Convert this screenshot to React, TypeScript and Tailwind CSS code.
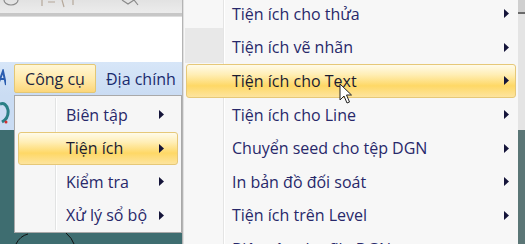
import React from "react";

const Arrow = () => (
  <svg width="5" height="9" viewBox="0 0 5 9" className="shrink-0">
    <path d="M0 0 L5 4.5 L0 9 Z" fill="#15153a" />
  </svg>
);

const subItems = [
  "Tiện ích cho thửa",
  "Tiện ích vẽ nhãn",
  "Tiện ích cho Text",
  "Tiện ích cho Line",
  "Chuyển seed cho tệp DGN",
  "In bản đồ đối soát",
  "Tiện ích trên Level",
  "Biên tập cho file DGN",
];

const leftItems = ["Biên tập", "Tiện ích", "Kiểm tra", "Xử lý sổ bộ"];

const hl =
  "bg-[linear-gradient(to_bottom,#fffbea_0%,#ffeeb5_30%,#fed866_65%,#fde49e_100%)] border border-[#e6c878] rounded-[3px]";

export default function App() {
  return (
    <div
      className="w-[525px] h-[244px] overflow-hidden relative flex bg-[#3e6d70] font-medium"
      style={{ fontFamily: '"Open Sans", "Noto Sans", sans-serif' }}
    >
      {/* left application column */}
      <div className="w-[182px] h-full flex flex-col shrink-0">
        {/* toolbar */}
        <div className="h-[13px] bg-[linear-gradient(to_bottom,#e2e2e2,#ececec)] relative">
          <svg width="182" height="13" className="absolute left-0 top-0">
            <path d="M4 0 A7 5 0 0 0 18 0" stroke="#8a8a8a" strokeWidth="1.2" fill="none" />
            <path d="M42 0 L42 6 M48 2 L55 2 M62 0 L64 7 M73 0 L73 5" stroke="#b5a89a" strokeWidth="1.2" fill="none" />
            <path d="M122 0 L128 4 L134 0 M134 0 L138 5" stroke="#8a8a8a" strokeWidth="1.2" fill="none" />
          </svg>
        </div>
        <div className="h-[4px] bg-[#c7c7c7] border-b border-[#dedede]" />
        {/* white area */}
        <div className="h-[45px] bg-white" />
        {/* menubar */}
        <div className="h-[33px] bg-[linear-gradient(to_bottom,#d7e6f8,#cadcf3)] flex items-center text-[16px] relative">
          <svg width="6" height="20" className="absolute left-0 top-[7px]">
            <path d="M-2 16 L3 2 L6 16 M0 10 L5 10" stroke="#2a5db0" strokeWidth="2" fill="none" />
          </svg>
          <div className="ml-[14px] h-[29px] w-[82px] flex items-center justify-center text-[#1c2440] bg-[linear-gradient(to_bottom,#fff6d5,#ffe9a8_55%,#fcd67a)] border border-[#e3c775] rounded-[2px]">
            Công cụ
          </div>
          <div className="ml-[10px] text-[#1a2b6e] whitespace-nowrap">Địa chính</div>
        </div>
        {/* dropdown row */}
        <div className="flex flex-1 min-h-0">
          <div className="w-[14px] flex flex-col">
            <div className="h-[35px] bg-[#cadcf3] relative">
              <svg width="14" height="30" className="absolute left-0 top-[3px]">
                <path d="M0 6 Q6 4 8 12 Q9 20 2 24" stroke="#2a7f86" strokeWidth="3" fill="none" />
                <circle cx="6" cy="24" r="1.5" fill="#d23030" />
              </svg>
            </div>
            <div className="flex-1 bg-[#3e6d70]" />
          </div>
          <div className="flex flex-col">
            <div className="w-[168px] h-[138px] bg-[#f6f6f6] border border-[#a9a9a9] flex relative text-[16px]">
              <div className="absolute left-[40px] top-[2px] bottom-[2px] w-[2px] border-l border-[#e2e3e3] bg-white" />
              <div className="flex flex-col w-full pt-[2px]">
                {leftItems.map((t, i) => (
                  <div
                    key={t}
                    className={`h-[33.5px] mx-[3px] flex items-center pl-[47px] pr-[13px] relative ${
                      i === 1 ? `${hl} text-[#1b1b30]` : "text-[#28286a] border border-transparent"
                    }`}
                  >
                    <span className="flex-1 whitespace-nowrap">{t}</span>
                    <Arrow />
                  </div>
                ))}
              </div>
            </div>
            <div className="flex-1 bg-[#3e6d70] relative">
              <svg width="168" height="11" className="absolute left-0 top-0">
                <path d="M2 11 Q6 3 14 1" stroke="#111" strokeWidth="1" fill="none" />
                <path d="M52 0 Q58 5 60 11" stroke="#111" strokeWidth="1" fill="none" />
              </svg>
            </div>
          </div>
        </div>
      </div>
      {/* border line */}
      <div className="w-[2px] h-full bg-[#b4b4b4] border-r border-[#e0e0e0]" />
      {/* submenu */}
      <div className="w-[334px] h-[260px] mt-[-3px] bg-[#f7f7f7] relative text-[16px] shrink-0">
        <div className="absolute left-[39px] top-0 bottom-0 w-[2px] border-l border-[#e4e4e4] bg-white" />
        <div className="absolute left-[1px] top-[31px] w-[38px] h-[35px] bg-[#e8e8e8]" />
        <div className="flex flex-col relative">
          {subItems.map((t, i) => (
            <div
              key={t}
              className={`h-[33.6px] ml-[2px] mr-[2px] flex items-center pl-[45px] pr-[6px] ${
                i === 2 ? `${hl} text-[#1b1b30]` : "text-[#28286a] border border-transparent"
              }`}
            >
              <span className="flex-1 whitespace-nowrap">{t}</span>
              <Arrow />
            </div>
          ))}
        </div>
      </div>
      {/* right strip */}
      <div className="flex-1 h-full flex flex-col">
        <div className="h-[12px] bg-[#cfcfcf]" />
        <div className="h-[2px] bg-[#6a6a6a]" />
        <div className="h-[116px] bg-[#e4e4e4]" />
        <div className="flex-1 bg-[#5b7676]" />
      </div>
      {/* cursor */}
      <svg width="14" height="22" viewBox="0 0 14 22" className="absolute left-[339px] top-[83px]">
        <path d="M1 1 L1 17 L5 13 L8 20 L10.5 19 L7.5 12 L12.5 12 Z" fill="#fff" stroke="#222" strokeWidth="1" strokeLinejoin="round" />
      </svg>
    </div>
  );
}
